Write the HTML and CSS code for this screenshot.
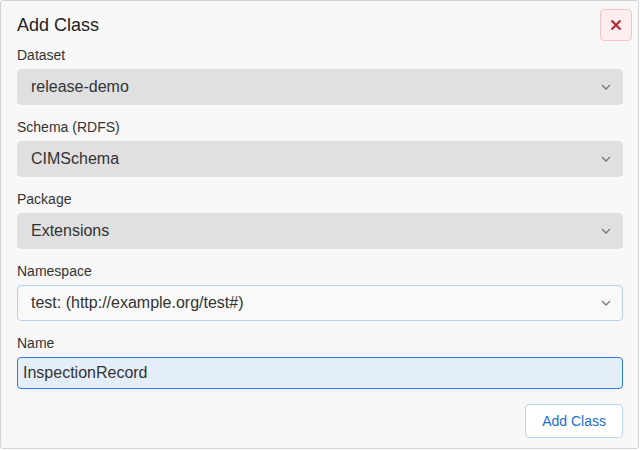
FILE: index.html
```html
<!DOCTYPE html>
<html>
<head>
<meta charset="utf-8">
<link rel="stylesheet" href="styles.css">
</head>
<body>
<div class="dialog">
  <div class="header">
    <h1 class="title">Add Class</h1>
    <button class="close" aria-label="Close">
      <svg width="12" height="12" viewBox="0 0 12 12"><path d="M1.5 1.5 L10.5 10.5 M10.5 1.5 L1.5 10.5" stroke="#b02a37" stroke-width="2.2" fill="none"/></svg>
    </button>
  </div>
  <div class="group">
    <div class="label">Dataset</div>
    <div class="select filled"><span>release-demo</span><svg class="chev" width="10" height="6" viewBox="0 0 10 6"><path d="M1 1 L5 5 L9 1" stroke="#777" stroke-width="1.3" fill="none"/></svg></div>
  </div>
  <div class="group">
    <div class="label">Schema (RDFS)</div>
    <div class="select filled"><span>CIMSchema</span><svg class="chev" width="10" height="6" viewBox="0 0 10 6"><path d="M1 1 L5 5 L9 1" stroke="#777" stroke-width="1.3" fill="none"/></svg></div>
  </div>
  <div class="group">
    <div class="label">Package</div>
    <div class="select filled"><span>Extensions</span><svg class="chev" width="10" height="6" viewBox="0 0 10 6"><path d="M1 1 L5 5 L9 1" stroke="#777" stroke-width="1.3" fill="none"/></svg></div>
  </div>
  <div class="group">
    <div class="label">Namespace</div>
    <div class="select outlined"><span>test: (http://example.org/test#)</span><svg class="chev" width="10" height="6" viewBox="0 0 10 6"><path d="M1 1 L5 5 L9 1" stroke="#777" stroke-width="1.3" fill="none"/></svg></div>
  </div>
  <div class="group last">
    <div class="label">Name</div>
    <div class="input">InspectionRecord</div>
  </div>
  <div class="footer">
    <button class="primary">Add Class</button>
  </div>
</div>
</body>
</html>
```

FILE: styles.css
```css
* { box-sizing: border-box; }
html, body {
  margin: 0;
  background: #ffffff;
  font-family: "Liberation Sans", Arial, sans-serif;
}
.dialog {
  position: relative;
  width: 639px;
  height: 449px;
  background: #f8f8f8;
  border: 1px solid #d2d2d2;
  border-radius: 3px;
  padding: 12px 15px 0 16px;
}
.header {
  height: 24px;
  margin-bottom: 8px;
}
.title {
  margin: 0;
  font-size: 18px;
  line-height: 24px;
  font-weight: normal;
  color: #222;
}
.close {
  position: absolute;
  top: 8px;
  right: 6px;
  width: 32px;
  height: 32px;
  background: #fdeeee;
  border: 1px solid #f6c4c8;
  border-radius: 4px;
  padding: 0;
  display: flex;
  align-items: center;
  justify-content: center;
}
.group { margin-bottom: 12px; }
.group.last { margin-bottom: 15px; }
.label {
  font-size: 14px;
  line-height: 20px;
  color: #333;
  margin-bottom: 4px;
}
.select {
  height: 36px;
  border-radius: 4px;
  display: flex;
  align-items: center;
  justify-content: space-between;
  padding: 0 11px 0 13px;
  font-size: 16px;
  color: #333;
}
.select.filled {
  background: #e0e0e0;
  border: 1px solid #e0e0e0;
}
.select.outlined {
  background: #f9f9f9;
  border: 1px solid #b8cfeb;
}
.chev { display: block; }
.input {
  height: 32px;
  background: #e4eef9;
  border: 1px solid #2f7bd6;
  border-radius: 4px;
  padding: 0 5px;
  display: flex;
  align-items: center;
  font-size: 16px;
  color: #333;
}
.footer {
  display: flex;
  justify-content: flex-end;
}
.primary {
  height: 34px;
  padding: 0 16px;
  background: #ffffff;
  border: 1px solid #b9d4f2;
  border-radius: 4px;
  color: #1c6dcd;
  font-family: "Liberation Sans", Arial, sans-serif;
  font-size: 14px;
}
```
